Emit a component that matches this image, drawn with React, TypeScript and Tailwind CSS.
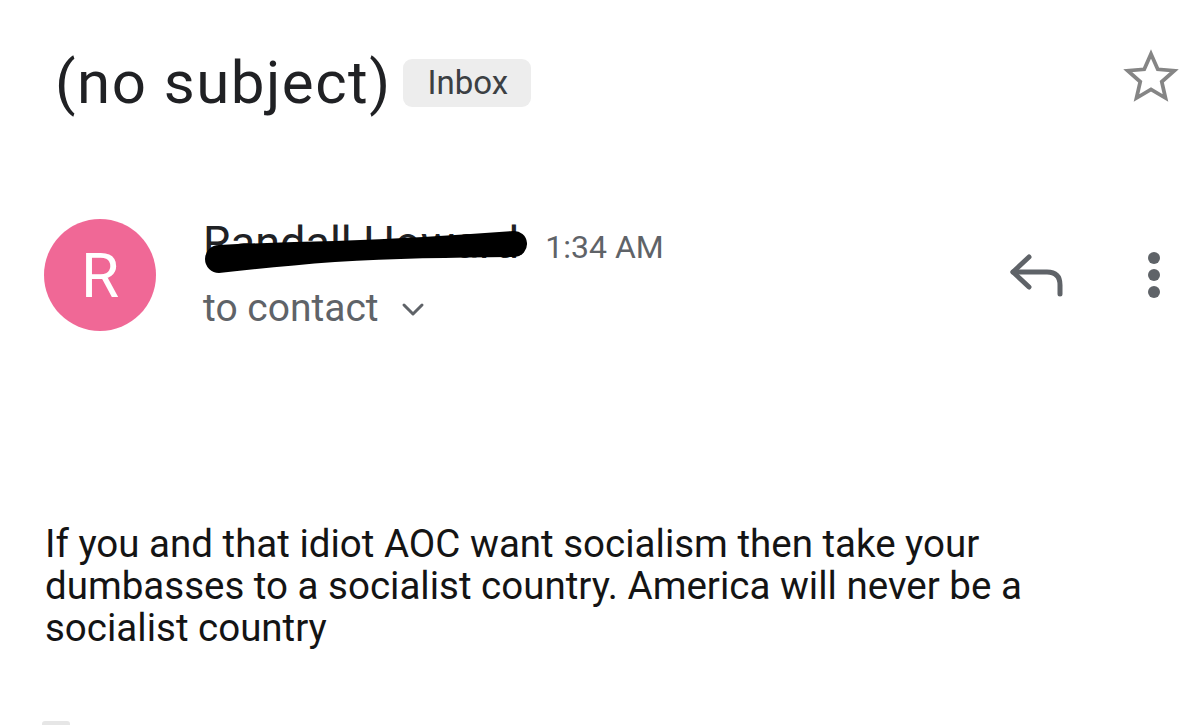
function Star() {
  return (
    <svg width="60" height="60" viewBox="0 0 24 24" fill="none" stroke="#858585" strokeWidth="1.5" strokeLinejoin="miter">
      <path d="M12 2.8l2.7 6.1 6.6.6-5 4.4 1.5 6.5L12 17l-5.8 3.4 1.5-6.5-5-4.4 6.6-.6z" />
    </svg>
  )
}

function ReplyIcon() {
  return (
    <svg width="58" height="46" viewBox="0 0 58 46" fill="none" stroke="#5f6368" strokeWidth="5" strokeLinecap="round" strokeLinejoin="round">
      <path d="M21 5L5 20l16 15" />
      <path d="M5 20h34q13 0 13 13v9" />
    </svg>
  )
}

function MoreDots() {
  return (
    <svg width="14" height="46" viewBox="0 0 14 46" fill="#5f6368">
      <circle cx="7" cy="6" r="6" />
      <circle cx="7" cy="23" r="6" />
      <circle cx="7" cy="40" r="6" />
    </svg>
  )
}

export default function App() {
  return (
    <div className="w-[1200px] h-[725px] overflow-hidden bg-white font-['Roboto',sans-serif]">
      {/* Subject */}
      <div className="flex items-start justify-between pl-[55px] pr-[19px] pt-[49px]">
        <div className="flex items-center gap-[11px]">
          <h1 className="text-[60px] leading-[68px] tracking-[1.5px] text-[#202124] font-normal">(no subject)</h1>
          <span className="rounded-[9px] bg-[#ededed] pl-[25px] pr-[23px] h-[48px] flex items-center text-[33px] text-[#3c4043]">
            Inbox
          </span>
        </div>
        <div className="-mt-[2px]">
          <Star />
        </div>
      </div>

      {/* Sender */}
      <div className="flex items-start pl-[44px] pr-[39px] pt-[102px]">
        <div className="w-[112px] h-[112px] rounded-full bg-[#f06896] flex items-center justify-center text-white text-[62px] shrink-0">
          R
        </div>
        <div className="ml-[47px] flex-1">
          <div className="flex items-baseline gap-[26px]">
            <div className="relative text-[45px] leading-[48px] text-[#202124]">
              Randall Howard
              {/* marker redaction */}
              <svg className="absolute left-[2px] top-[4px]" width="330" height="56" viewBox="0 0 330 56" fill="#000">
                <path d="M14 22 C50 20 90 19 130 18 C190 16 250 12 308 8 A13 13 0 0 1 310 34 C250 35 190 35 130 39 C90 42 50 46 14 50 A14 14 0 0 1 14 22 Z" />
              </svg>
            </div>
            <span className="text-[32px] text-[#5f6368]">1:34 AM</span>
          </div>
          <div className="mt-[15px] flex items-center gap-[22px] text-[39px] leading-[44px] text-[#5f6368]">
            <span>to contact</span>
            <svg className="mt-[2px]" width="24" height="16" viewBox="0 0 24 16" fill="none" stroke="#5f6368" strokeWidth="3" strokeLinecap="round" strokeLinejoin="round">
              <path d="M3 4l9 9 9-9" />
            </svg>
          </div>
        </div>
        <div className="flex items-start gap-[81px] mt-[33px]">
          <ReplyIcon />
          <MoreDots />
        </div>
      </div>

      {/* Body */}
      <div className="pl-[45px] pt-[192px] w-[1050px] text-[38.5px] leading-[42px] text-[#141414]">
        If you and that idiot AOC want socialism then take your dumbasses to a socialist country. America will never be a socialist country
      </div>
      <div className="ml-[42px] mt-[72px] w-[28px] h-[20px] rounded-[3px] bg-[#e6e6e6]" />
    </div>
  )
}
